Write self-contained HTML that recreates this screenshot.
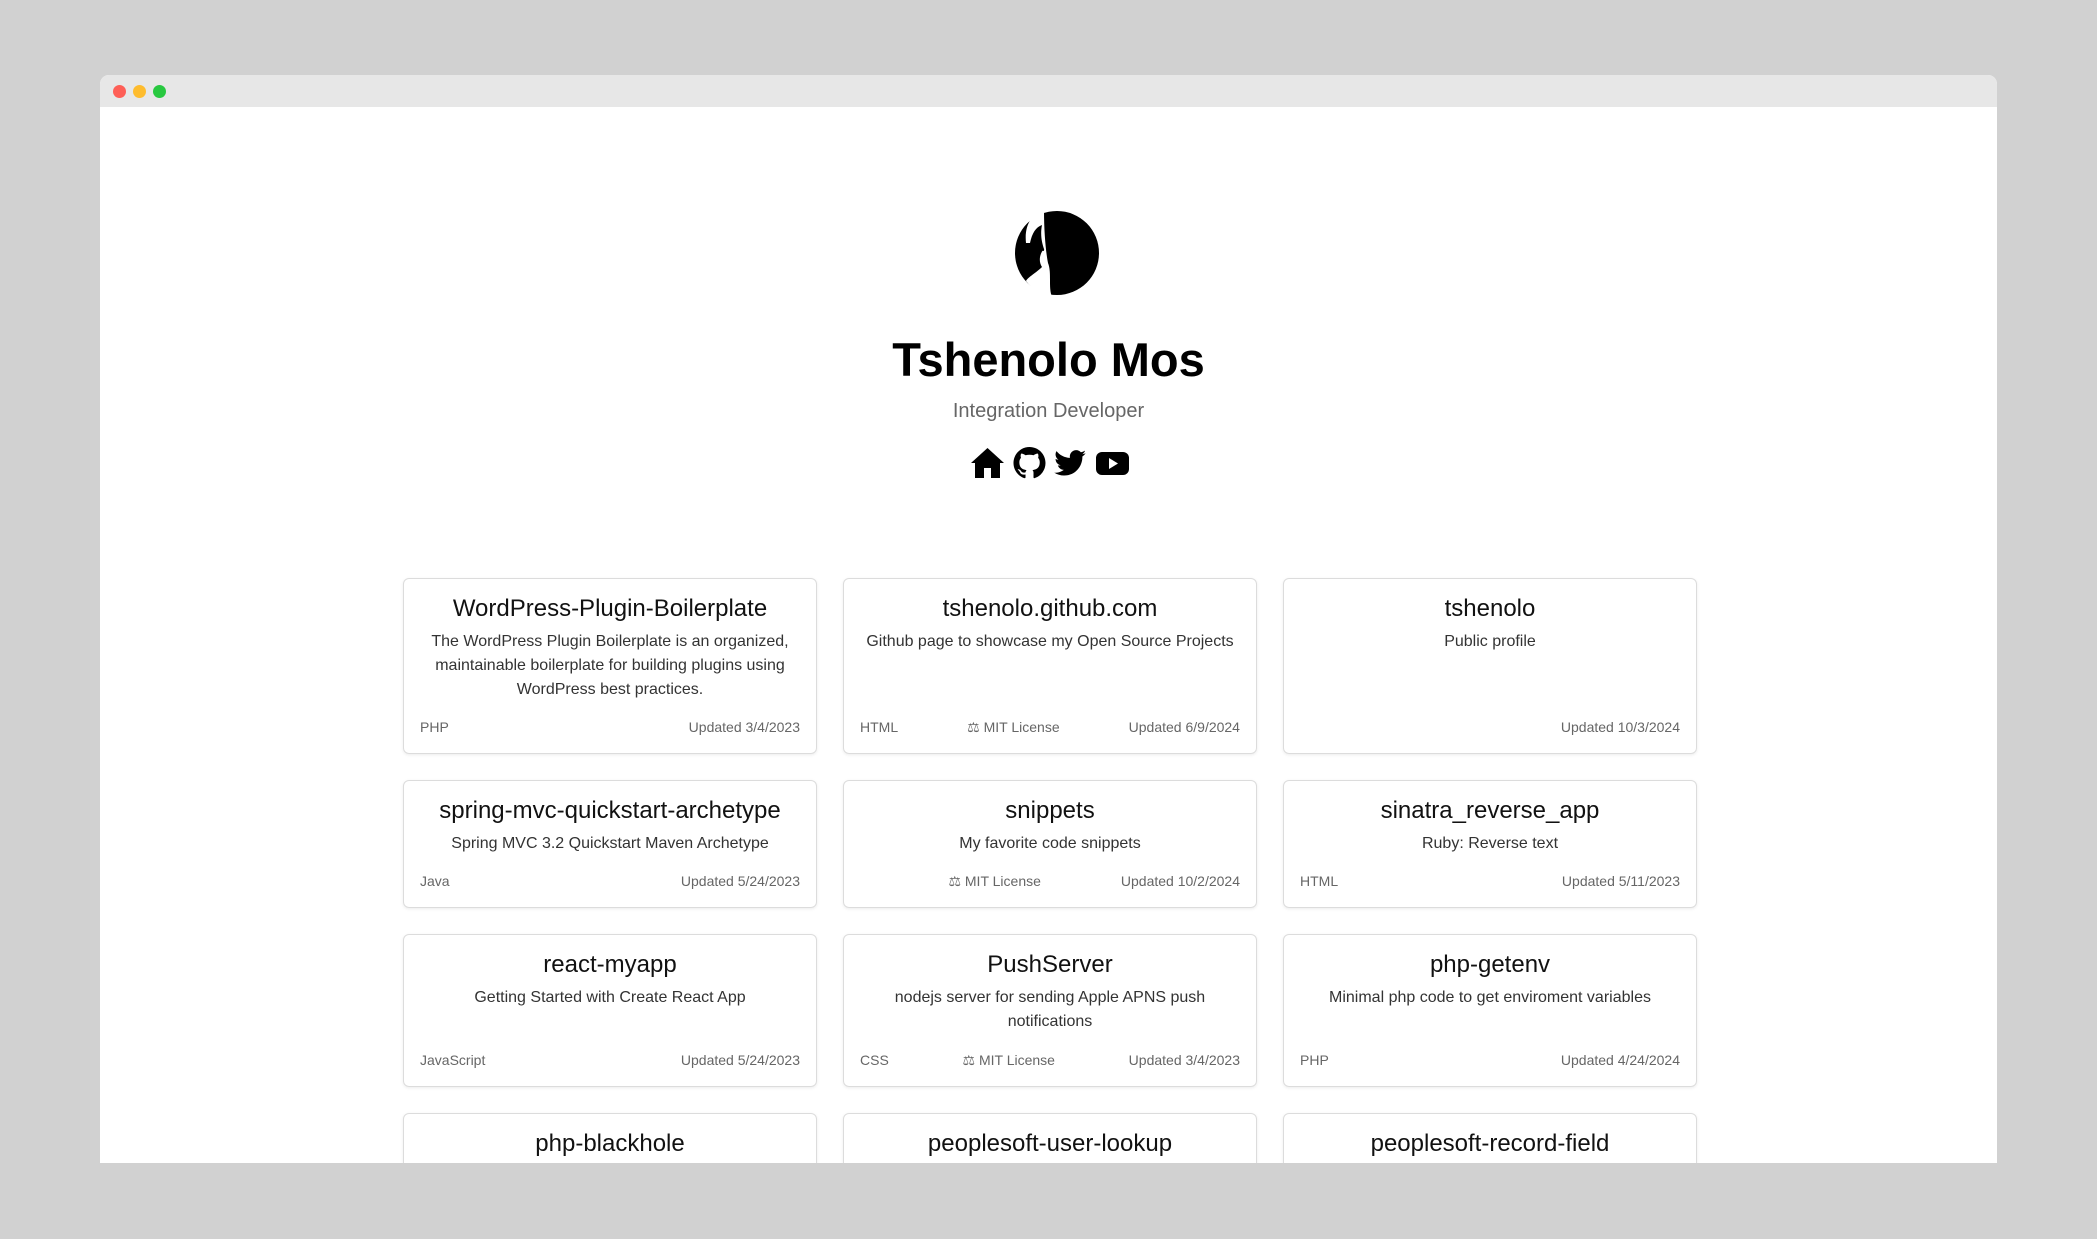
<!DOCTYPE html>
<html><head><meta charset="utf-8"><style>
*{box-sizing:border-box;margin:0;padding:0}
body{width:2097px;height:1239px;background:#d1d1d1;font-family:"Liberation Sans",sans-serif;overflow:hidden;position:relative}
.win{position:absolute;left:100px;top:75px;width:1897px;height:1088px;background:#fff;border-radius:9px 9px 0 0;overflow:hidden}
.bar{height:32px;background:#e7e7e7;position:relative}
.dot{position:absolute;top:10px;width:13px;height:13px;border-radius:50%}
h1{position:absolute;left:0;right:0;top:257px;text-align:center;font-size:47px;font-weight:bold;color:#000;line-height:56px}
.sub{position:absolute;left:0;right:0;top:323px;text-align:center;font-size:20px;color:#666;line-height:26px}
.icons{position:absolute;left:870px;top:372px;display:flex;gap:8px}
.grid{position:absolute;left:303px;top:503px;width:1294px;display:grid;grid-template-columns:414px 414px 414px;column-gap:26px;row-gap:26px;align-items:start}
.card{border:1px solid #dcdcdc;border-radius:6px;box-shadow:0 1px 3px rgba(0,0,0,.08);padding:14px 16px 16px;display:flex;flex-direction:column;text-align:center}
.t{font-size:24px;line-height:32px;color:#111}
.d{font-size:16px;line-height:24px;color:#333;margin-top:5px}
.f{display:flex;justify-content:space-between;font-size:14px;line-height:20px;color:#666;margin-top:15px}
.r1{height:176px}.r1 .f{margin-top:auto}
</style></head><body>
<div class="win">
<div class="bar"><div class="dot" style="left:13px;background:#fe5f57"></div><div class="dot" style="left:33px;background:#febc2e"></div><div class="dot" style="left:53px;background:#28c840"></div></div>
<svg style="position:absolute;left:914px;top:128px" width="86" height="100" viewBox="0 0 86 100">
<circle cx="43" cy="50" r="42" fill="#000"/>
<path d="M30 8 C18 10 10 22 12 40 L16 40 C18 30 22 24 28 22 C26 32 28 40 30 46 C26 50 24 58 28 64 C22 70 14 74 12 78 C18 86 28 92 38 94 C34 84 38 70 34 60 C32 50 30 30 30 8Z" fill="#fff"/>
<path d="M20 45 L30 47" stroke="#000" stroke-width="2"/>
</svg>
<h1>Tshenolo Mos</h1>
<div class="sub">Integration Developer</div>
<div class="icons">
<svg width="35" height="32" viewBox="0 0 35 32"><path d="M17.5 1 L34 16 L30 16 L30 31 L21 31 L21 21 L14 21 L14 31 L5 31 L5 16 L1 16Z" fill="#000"/></svg>
<svg width="33" height="32" viewBox="0 0 16 16"><path fill="#000" d="M8 0C3.58 0 0 3.58 0 8c0 3.54 2.29 6.530 5.47 7.59.4.07.55-.17.55-.38 0-.19-.01-.82-.01-1.490-2.010.37-2.530-.49-2.690-.94-.09-.23-.48-.94-.82-1.130-.28-.15-.68-.52-.01-.53.63-.01 1.080.58 1.230.82.72 1.210 1.870.87 2.330.66.07-.52.28-.87.51-1.070-1.780-.2-3.640-.89-3.640-3.950 0-.87.31-1.590.82-2.150-.08-.2-.36-1.020.08-2.120 0 0 .67-.21 2.2.82.64-.18 1.320-.27 2-.27.68 0 1.360.09 2 .27 1.530-1.040 2.2-.82 2.2-.82.44 1.1.16 1.920.08 2.120.51.56.82 1.270.82 2.150 0 3.070-1.870 3.750-3.650 3.950.29.25.54.73.54 1.480 0 1.070-.01 1.930-.01 2.2 0 .21.15.46.55.38A8.013 8.013 0 0016 8c0-4.420-3.580-8-8-8z"/></svg>
<svg width="33" height="32" viewBox="0 0 24 24"><path fill="#000" d="M23.6 4.6c-.9.4-1.800.6-2.800.8 1-.6 1.800-1.600 2.100-2.700-.9.6-2 1-3.100 1.200C18.9 2.900 17.700 2.300 16.300 2.300c-2.700 0-4.800 2.200-4.800 4.800 0 .4 0 .8.1 1.100C7.500 8 3.900 6.100 1.500 3.100c-.4.7-.7 1.600-.7 2.400 0 1.700.9 3.200 2.200 4-.8 0-1.500-.2-2.200-.6v.1c0 2.300 1.700 4.300 3.900 4.700-.4.1-.8.2-1.300.2-.3 0-.6 0-.9-.1.6 1.900 2.400 3.300 4.500 3.400-1.700 1.300-3.700 2.100-6 2.100-.4 0-.8 0-1.200-.1 2.100 1.400 4.700 2.200 7.400 2.200 8.900 0 13.700-7.400 13.700-13.700v-.6c1-.7 1.800-1.500 2.500-2.500z"/></svg>
<svg width="35" height="32" viewBox="0 0 35 32"><rect x="1" y="5" width="33" height="23" rx="6" fill="#000"/><path d="M14 11 L23 16.5 L14 22Z" fill="#fff"/></svg>
</div>
<div class="grid">
<div class="card r1"><div class="t">WordPress-Plugin-Boilerplate</div><div class="d">The WordPress Plugin Boilerplate is an organized, maintainable boilerplate for building plugins using WordPress best practices.</div><div class="f"><span>PHP</span><span>Updated 3/4/2023</span></div></div>
<div class="card r1"><div class="t">tshenolo.github.com</div><div class="d">Github page to showcase my Open Source Projects</div><div class="f"><span>HTML</span><span>⚖ MIT License</span><span>Updated 6/9/2024</span></div></div>
<div class="card r1"><div class="t">tshenolo</div><div class="d">Public profile</div><div class="f" style="justify-content:flex-end"><span>Updated 10/3/2024</span></div></div>
<div class="card"><div class="t">spring-mvc-quickstart-archetype</div><div class="d">Spring MVC 3.2 Quickstart Maven Archetype</div><div class="f"><span>Java</span><span>Updated 5/24/2023</span></div></div>
<div class="card"><div class="t">snippets</div><div class="d">My favorite code snippets</div><div class="f" style="justify-content:flex-end;gap:80px"><span>⚖ MIT License</span><span>Updated 10/2/2024</span></div></div>
<div class="card"><div class="t">sinatra_reverse_app</div><div class="d">Ruby: Reverse text</div><div class="f"><span>HTML</span><span>Updated 5/11/2023</span></div></div>
<div class="card" style="height:153px"><div class="t">react-myapp</div><div class="d">Getting Started with Create React App</div><div class="f" style="margin-top:auto"><span>JavaScript</span><span>Updated 5/24/2023</span></div></div>
<div class="card" style="height:153px"><div class="t">PushServer</div><div class="d">nodejs server for sending Apple APNS push notifications</div><div class="f" style="margin-top:auto"><span>CSS</span><span>⚖ MIT License</span><span>Updated 3/4/2023</span></div></div>
<div class="card" style="height:153px"><div class="t">php-getenv</div><div class="d">Minimal php code to get enviroment variables</div><div class="f" style="margin-top:auto"><span>PHP</span><span>Updated 4/24/2024</span></div></div>
<div class="card" style="height:120px"><div class="t">php-blackhole</div></div>
<div class="card" style="height:120px"><div class="t">peoplesoft-user-lookup</div></div>
<div class="card" style="height:120px"><div class="t">peoplesoft-record-field</div></div>
</div>
</div>
</body></html>
